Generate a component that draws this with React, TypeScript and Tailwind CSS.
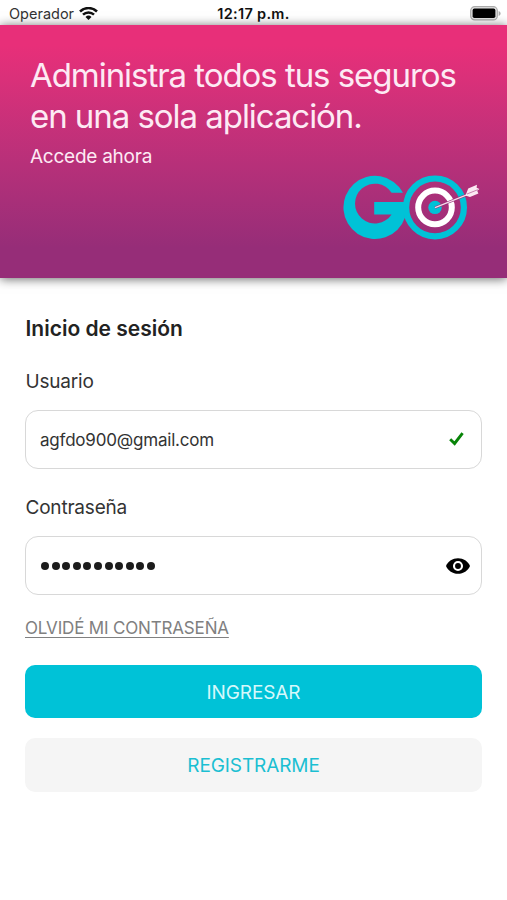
import React from 'react';

const ACCOUNT = {
  user: 'agfdo900@gmail.com',
  passwordLength: 11,
};

const WifiIcon = () => (
  <svg width="19" height="13" viewBox="0 0 19 13" fill="none" stroke="#111111" strokeWidth="2.5">
    <path d="M1 4.5a12.2 12.2 0 0 1 17 0" />
    <path d="M4 7.6a8 8 0 0 1 11 0" />
    <path d="M9.5 13 6.5 10a4.3 4.3 0 0 1 6 0Z" fill="#111111" stroke="none" />
  </svg>
);

const BatteryIcon = () => (
  <svg width="31" height="15" viewBox="0 0 31 15">
    <rect x="0.7" y="0.7" width="26.6" height="13.2" rx="4" fill="#e4e4e4" stroke="#aaaaaa" strokeWidth="1.2" />
    <rect x="2.6" y="2.6" width="22.8" height="9.4" rx="1.8" fill="#000000" />
    <path d="M28.6 5v5c1.3-.5 2-1.4 2-2.5s-.7-2-2-2.5Z" fill="#aaaaaa" />
  </svg>
);

const GoLogo = () => (
  <svg width="137" height="66" viewBox="343 174 137 66" role="img" aria-label="GO">
    <path
      d="M403 192.7A31.6 31.6 0 1 0 405 217.5L404 202H374.2v12.4h17.4A19.9 19.9 0 1 1 391.6 192.7Z"
      fill="#00c2d7"
    />
    <circle cx="435" cy="207.4" r="28.9" fill="none" stroke="#00c2d7" strokeWidth="6.2" />
    <circle cx="435" cy="207.4" r="16.8" fill="none" stroke="#ffffff" strokeWidth="6" />
    <circle cx="435" cy="207.4" r="6.7" fill="#00c2d7" />
    <path d="M435 207.6 468 194.4" stroke="#962d78" strokeWidth="2.6" />
    <path d="M435 207.6 468 194.4" stroke="#f6dcea" strokeWidth="1.3" />
    <path d="m465.5 195.5 2.7-7 8.8-3.7-.4 2.9 2.8 1.3-2.2 1.7 1.2 2.7-8.4 3.6Z" fill="#fbeaf3" />
    <path d="m467 194 10.8-4.3" stroke="#b2528f" strokeWidth="0.7" />
  </svg>
);

const CheckIcon = () => (
  <svg width="15" height="14" viewBox="0 0 15 14" fill="none" stroke="#088408" strokeWidth="2.9">
    <path d="M1.2 7.2 5.6 11.5 13.6 1.2" />
  </svg>
);

const EyeIcon = () => (
  <svg width="24" height="16" viewBox="0 0 24 16">
    <path d="M0 8C2.1 3.2 6.6.2 12 .2S21.9 3.2 24 8c-2.1 4.8-6.6 7.8-12 7.8S2.1 12.8 0 8Z" fill="#000000" />
    <circle cx="12" cy="8" r="4" fill="#000000" stroke="#ffffff" strokeWidth="2.1" />
  </svg>
);

interface FieldProps {
  label: string;
  icon: React.ReactNode;
  children: React.ReactNode;
}

const Field: React.FC<FieldProps> = ({ label, icon, children }) => (
  <div>
    <div className="pl-[0.5px] text-[19px] leading-7 tracking-[-0.2px] text-[#333333]">{label}</div>
    <div className="mt-[14px] flex h-[59px] items-center justify-between rounded-[13px] border border-[#d8d8d8] pl-[14px]">
      {children}
      {icon}
    </div>
  </div>
);

export default function App() {
  return (
    <div className="flex min-h-[900px] w-full flex-col overflow-hidden bg-white font-['Inter','Liberation_Sans',sans-serif]">
      <div className="grid h-[25px] grid-cols-[1fr_auto_1fr] items-center pt-[2px] pr-[6px] pl-[9px] text-[#111111]">
        <div className="flex items-center gap-[5px] text-[14.5px]">
          <span className="text-[#333333]">Operador</span>
          <WifiIcon />
        </div>
        <span className="mr-[3px] text-[14.5px] font-semibold tracking-[0.3px]">12:17 p.m.</span>
        <div className="flex justify-end">
          <BatteryIcon />
        </div>
      </div>

      <header className="flex h-[253px] flex-col bg-linear-to-b from-[#e82f79] from-8% to-[#962d78] to-88% px-[30px] pt-[30px] text-[#fdeaf4] shadow-[0_1px_10px_rgba(0,0,0,0.6)]">
        <h1 className="text-[33px] leading-[41px] font-normal tracking-[-1.05px] whitespace-nowrap">
          Administra todos tus seguros
          <br />
          en una sola aplicación.
        </h1>
        <p className="mt-[6px] text-[19px] leading-7 tracking-[-0.25px]">Accede ahora</p>
        <div className="mt-[3px] mr-[-3px] self-end">
          <GoLogo />
        </div>
      </header>

      <main className="flex flex-col px-[25px] pt-[37px]">
        <h2 className="pl-[0.5px] text-[21px] leading-7 font-semibold text-[#222222]">Inicio de sesión</h2>
        <div className="mt-[25px] flex flex-col gap-[25px]">
          <Field label="Usuario" icon={<span className="mr-[17px] pb-px"><CheckIcon /></span>}>
            <span className="pt-[2px] text-[17px] tracking-[-0.2px] text-[#333333]">{ACCOUNT.user}</span>
          </Field>
          <Field label="Contraseña" icon={<span className="mr-[11px]"><EyeIcon /></span>}>
            <div className="flex gap-[2.6px] pl-[1px]">
              {Array.from({ length: ACCOUNT.passwordLength }, (_, i) => (
                <span key={i} className="size-2 rounded-full bg-[#1c1c1c]" />
              ))}
            </div>
          </Field>
        </div>
        <a
          href="#"
          className="mt-[21px] self-start text-[17px] leading-6 tracking-[-0.17px] text-[#808080] underline underline-offset-[3px]"
        >
          OLVIDÉ MI CONTRASEÑA
        </a>
        <button className="mt-[25px] h-[53px] rounded-[10px] bg-[#00c2d7] pt-[3px] text-[19px] tracking-[-0.1px] text-[#d5f8fb]">
          INGRESAR
        </button>
        <button className="mt-[20px] h-[54px] rounded-[10px] bg-[#f5f5f5] pt-[2px] text-[19px] tracking-[-0.1px] text-[#1bbfd2]">
          REGISTRARME
        </button>
      </main>
    </div>
  );
}
